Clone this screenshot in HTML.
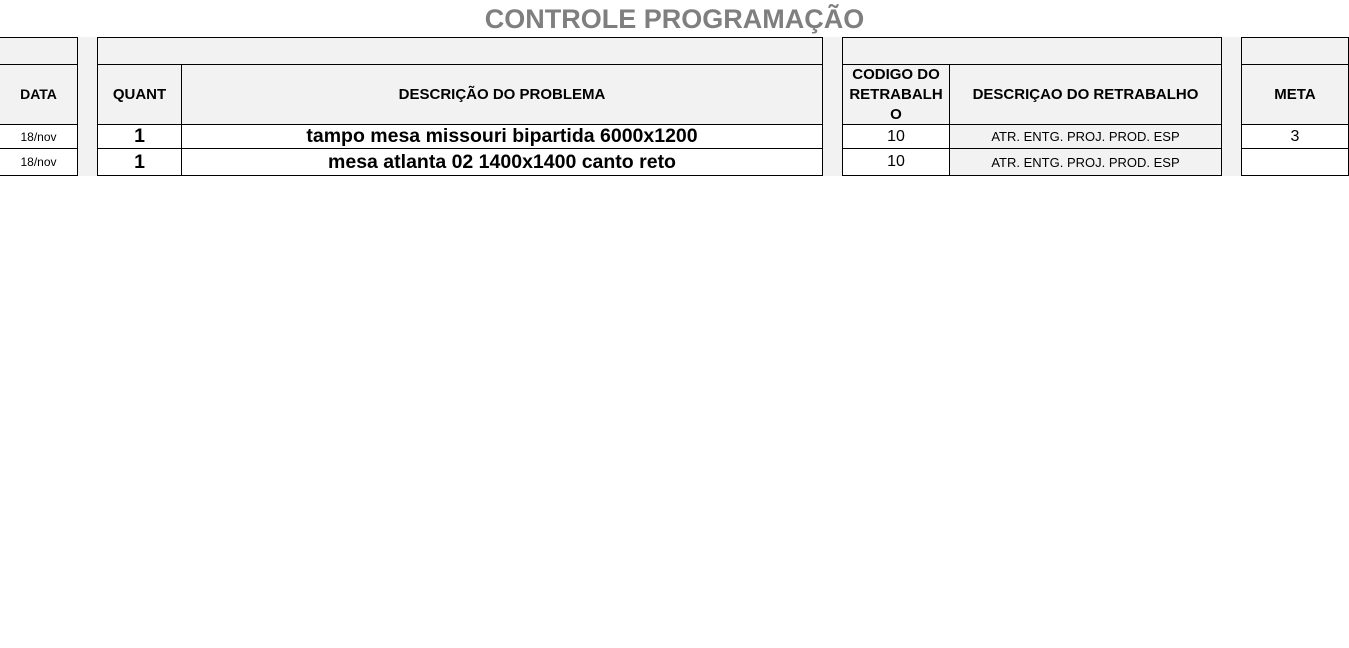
<!DOCTYPE html>
<html><head><meta charset="utf-8"><style>
body{margin:0;width:1349px;height:648px;background:#fff;position:relative;overflow:hidden;font-family:"Liberation Sans",Arial,sans-serif;color:#000}
.t{position:absolute;left:0;width:1349px;top:3px;text-align:center;font-size:27px;font-weight:bold;color:#7f7f7f;line-height:32px}
.c{position:absolute;box-sizing:border-box;border:1px solid #000;display:flex;align-items:center;justify-content:center;text-align:center;background:#fff}
.g{background:#f2f2f2}
.gap{position:absolute;background:#f2f2f2}
.h{font-weight:bold;font-size:15px;line-height:19px}
.b{font-size:19.5px;font-weight:bold}
</style></head><body>
<div class="t">CONTROLE PROGRAMAÇÃO</div>
<div class="gap" style="left:78px;top:37px;width:19px;height:139px"></div>
<div class="gap" style="left:823px;top:37px;width:19px;height:139px"></div>
<div class="gap" style="left:1222px;top:37px;width:19px;height:139px"></div>
<div class="c g" style="left:-1px;top:37px;width:79px;height:28px"></div>
<div class="c g" style="left:97px;top:37px;width:726px;height:28px"></div>
<div class="c g" style="left:842px;top:37px;width:380px;height:28px"></div>
<div class="c g" style="left:1241px;top:37px;width:108px;height:28px"></div>
<div class="c g h" style="left:-1px;top:64px;width:79px;height:61px;font-size:14px">DATA</div>
<div class="c g h" style="left:97px;top:64px;width:85px;height:61px">QUANT</div>
<div class="c g h" style="left:181px;top:64px;width:642px;height:61px">DESCRIÇÃO DO PROBLEMA</div>
<div class="c g h" style="left:842px;top:64px;width:108px;height:61px;line-height:20px">CODIGO DO<br>RETRABALH<br>O</div>
<div class="c g h" style="left:949px;top:64px;width:273px;height:61px">DESCRIÇAO DO RETRABALHO</div>
<div class="c g h" style="left:1241px;top:64px;width:108px;height:61px">META</div>
<div class="c" style="left:-1px;top:124px;width:79px;height:25px;font-size:12px">18/nov</div>
<div class="c b" style="left:97px;top:124px;width:85px;height:25px">1</div>
<div class="c b" style="left:181px;top:124px;width:642px;height:25px">tampo mesa missouri bipartida 6000x1200</div>
<div class="c" style="left:842px;top:124px;width:108px;height:25px;font-size:16px">10</div>
<div class="c g" style="left:949px;top:124px;width:273px;height:25px;font-size:13px">ATR. ENTG. PROJ. PROD. ESP</div>
<div class="c" style="left:1241px;top:124px;width:108px;height:25px;font-size:16px">3</div>
<div class="c" style="left:-1px;top:148px;width:79px;height:28px;font-size:12px">18/nov</div>
<div class="c b" style="left:97px;top:148px;width:85px;height:28px">1</div>
<div class="c b" style="left:181px;top:148px;width:642px;height:28px">mesa atlanta 02 1400x1400 canto reto</div>
<div class="c" style="left:842px;top:148px;width:108px;height:28px;font-size:16px">10</div>
<div class="c g" style="left:949px;top:148px;width:273px;height:28px;font-size:13px">ATR. ENTG. PROJ. PROD. ESP</div>
<div class="c" style="left:1241px;top:148px;width:108px;height:28px"></div>
</body></html>
